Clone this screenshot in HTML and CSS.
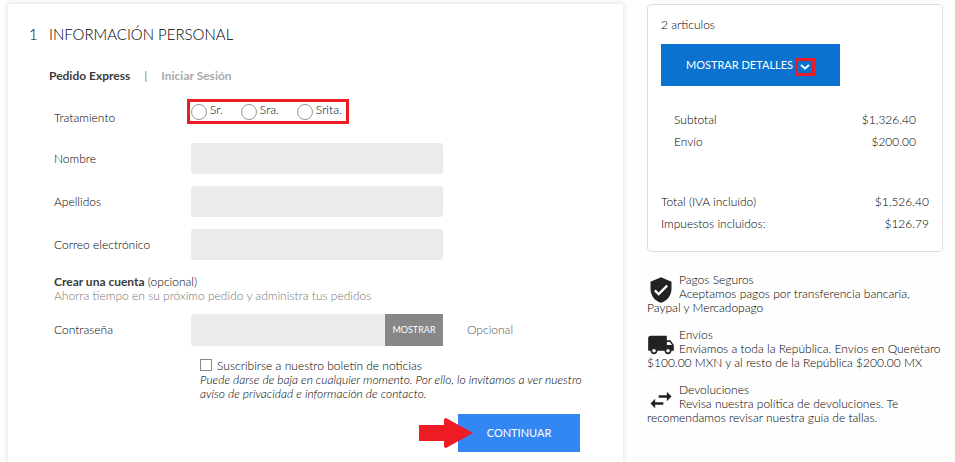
FILE: index.html
```html
<!DOCTYPE html>
<html lang="es">
<head>
<meta charset="utf-8">
<meta name="viewport" content="width=device-width, initial-scale=1">
<title>Información personal</title>
<link rel="stylesheet" href="styles.css">
</head>
<body>
<main class="checkout">
  <section class="step">
    <h1 class="step-title"><span class="step-number">1</span>Información personal</h1>
    <nav class="tabs">
      <a class="tab tab-active" href="#express">Pedido Express</a>
      <span class="tab-divider">|</span>
      <a class="tab" href="#login">Iniciar Sesión</a>
    </nav>
    <form class="form">
      <div class="row row-title">
        <span class="label" id="treatment">Tratamiento</span>
        <div class="radios" role="radiogroup" aria-labelledby="treatment">
          <label class="radio"><input type="radio" name="title">Sr.</label>
          <label class="radio"><input type="radio" name="title">Sra.</label>
          <label class="radio"><input type="radio" name="title">Srita.</label>
        </div>
      </div>
      <div class="row">
        <label class="label" for="name">Nombre</label>
        <input class="field" id="name" type="text">
      </div>
      <div class="row">
        <label class="label" for="surname">Apellidos</label>
        <input class="field" id="surname" type="text">
      </div>
      <div class="row">
        <label class="label" for="email">Correo electrónico</label>
        <input class="field" id="email" type="email">
      </div>
      <p class="account"><strong>Crear una cuenta</strong> (opcional)<br><span class="muted">Ahorra tiempo en su próximo pedido y administra tus pedidos</span></p>
      <div class="row">
        <label class="label" for="password">Contraseña</label>
        <div class="password">
          <input class="field" id="password" type="password">
          <button class="reveal" type="button">MOSTRAR</button>
        </div>
        <span class="comment">Opcional</span>
      </div>
      <div class="newsletter">
        <label class="check"><input type="checkbox">Suscribirse a nuestro boletín de noticias</label>
        <em>Puede darse de baja en cualquier momento. Por ello, lo invitamos a ver nuestro aviso de privacidad e información de contacto.</em>
      </div>
      <div class="actions">
        <button class="continue" type="submit">CONTINUAR</button>
        <svg class="arrow" viewBox="0 0 54 30" aria-hidden="true"><path d="M0 7h25V1l2-1 27 15-27 15-2-1v-6H0z"/></svg>
      </div>
    </form>
  </section>

  <aside class="side">
    <section class="summary">
      <p class="count">2 articulos</p>
      <button class="details" type="button">MOSTRAR DETALLES
        <span class="chevron"><svg viewBox="0 0 10 6" aria-hidden="true"><path d="M1 1l4 3.500 4-3.500"/></svg></span>
      </button>
      <dl class="lines lines-inner">
        <div class="line"><dt>Subtotal</dt><dd>$1,326.40</dd></div>
        <div class="line"><dt>Envío</dt><dd>$200.00</dd></div>
      </dl>
      <dl class="lines">
        <div class="line"><dt>Total (IVA incluído)</dt><dd>$1,526.40</dd></div>
        <div class="line"><dt>Impuestos incluidos:</dt><dd>$126.79</dd></div>
      </dl>
    </section>
    <ul class="notes">
      <li class="note">
        <svg class="note-icon" viewBox="0 0 24 24" aria-hidden="true"><path d="M12 1L3 5v6c0 5.550 3.840 10.740 9 12 5.160-1.260 9-6.450 9-12V5l-9-4zm-2 16l-4-4 1.410-1.410L10 14.170l6.590-6.590L18 9l-8 8z"/></svg>
        Pagos Seguros<br>Aceptamos pagos por transferencia bancaria, Paypal y Mercadopago
      </li>
      <li class="note">
        <svg class="note-icon" viewBox="0 0 24 24" aria-hidden="true"><path d="M20 8h-3V4H3c-1.100 0-2 .9-2 2v11h2c0 1.660 1.340 3 3 3s3-1.340 3-3h6c0 1.660 1.340 3 3 3s3-1.340 3-3h2v-5l-3-4zM6 18.500c-.83 0-1.500-.67-1.500-1.500s.67-1.500 1.500-1.500 1.500.67 1.500 1.500-.67 1.500-1.500 1.500zm13.500-9l1.960 2.500H17V9.500h2.500zm-1.500 9c-.83 0-1.500-.67-1.500-1.500s.67-1.500 1.500-1.500 1.500.67 1.500 1.500-.67 1.500-1.500 1.500z"/></svg>
        Envíos<br>Enviamos a toda la República. Envíos en Querétaro $100.00 MXN y al resto de la República $200.00 MX
      </li>
      <li class="note">
        <svg class="note-icon" viewBox="0 0 24 24" aria-hidden="true"><path d="M6.990 11L3 15l3.990 4v-3H14v-2H6.990v-3zM21 9l-3.990-4v3H10v2h7.010v3L21 9z"/></svg>
        Devoluciones<br>Revisa nuestra política de devoluciones. Te recomendamos revisar nuestra guía de tallas.
      </li>
    </ul>
  </aside>
</main>
</body>
</html>
```
FILE: styles.css
```css
* {
  box-sizing: border-box;
}

body {
  margin: 0;
  background: #fefefe;
  color: #000;
  font-family: Lato, sans-serif;
  font-size: 12px;
  font-weight: 300;
  line-height: 14px;
}

h1, p, dl, dd, ul {
  margin: 0;
  padding: 0;
}

button, input {
  margin: 0;
  border: 0;
  border-radius: 0;
  font: inherit;
}

.checkout {
  display: grid;
  grid-template-columns: 615fr 296fr;
  gap: 24px;
  min-height: 100vh;
  padding: 4px 12px 0 8px;
}

.step {
  padding: 20px 28px 8px 21px;
  background: #fff;
  box-shadow: 0 0 5px 1px rgba(0, 0, 0, 0.1);
}

.step-title {
  display: flex;
  font-size: 15px;
  font-weight: 300;
  line-height: 20px;
  text-transform: uppercase;
}

.step-number {
  width: 20px;
}

.tabs {
  display: flex;
  gap: 14px;
  padding: 25px 0 0 20px;
  font-weight: 700;
}

.tab {
  color: #aaa;
  text-decoration: none;
}

.tab-active {
  color: #3c3c3c;
}

.tab-divider {
  color: #888;
  font-weight: 400;
}

.form {
  padding: 15px 0 0 25px;
}

.row {
  display: grid;
  grid-template-columns: 137px 252px 1fr;
  align-items: center;
  margin-bottom: 12px;
}

.row-title {
  margin-bottom: 18px;
}

.row-title .label {
  padding-top: 13px;
}

.radios {
  display: flex;
  justify-self: start;
  gap: 18px;
  height: 25px;
  margin-left: -4px;
  padding: 1px 4px 0 1px;
  border: 3px solid #ed1c24;
}

.radio {
  display: flex;
  gap: 3px;
}

.radio input {
  appearance: none;
  width: 16px;
  height: 16px;
  margin-top: 1px;
  border: 1px solid #999;
  border-radius: 50%;
  background: #fff;
}

.field {
  width: 100%;
  height: 31px;
  padding: 0 10px;
  border-radius: 3px;
  background: #ebebeb;
}

.account {
  padding: 3px 0 11px;
}

.account strong {
  font-weight: 700;
  color: #3c3c3c;
}

.muted {
  color: #777;
}

.password {
  display: flex;
}

.password .field {
  flex: 1;
  min-width: 0;
  height: 32px;
  border-radius: 3px 0 0 3px;
}

.reveal {
  width: 58px;
  padding: 0;
  background: #878787;
  color: #fff;
  font-size: 9px;
  font-weight: 400;
}

.comment {
  padding-left: 24px;
  color: #555;
}

.newsletter {
  padding: 1px 0 0 146px;
}

.check {
  display: flex;
  gap: 5px;
}

.check input {
  appearance: none;
  width: 12px;
  height: 12px;
  border: 1px solid #888;
  background: #fff;
}

.actions {
  position: relative;
  display: flex;
  justify-content: flex-end;
  padding: 13px 15px 0 0;
}

.continue {
  width: 122px;
  height: 38px;
  background: #3387f3;
  color: #fff;
  font-size: 11px;
  font-weight: 400;
}

.arrow {
  position: absolute;
  top: 17px;
  right: 122px;
  width: 54px;
  height: 30px;
  fill: #ed1c24;
}

.summary {
  height: 248px;
  padding: 13px;
  border: 1px solid #ddd;
  border-radius: 4px;
  background: #fff;
}

.details {
  display: flex;
  align-items: center;
  justify-content: center;
  gap: 2px;
  width: 179px;
  height: 42px;
  margin-top: 12px;
  background: #0b72d0;
  color: #fff;
  font-size: 11px;
  font-weight: 400;
}

.chevron {
  display: grid;
  place-items: center;
  width: 20px;
  height: 18px;
  margin-top: 4px;
  border: 3px solid #ed1c24;
}

.chevron svg {
  width: 10px;
  height: 6px;
  fill: none;
  stroke: #fff;
  stroke-width: 2;
}

.lines-inner {
  padding: 23px 13px 38px;
}

.line {
  display: flex;
  justify-content: space-between;
  line-height: 22px;
}

.notes {
  padding-top: 21px;
  list-style: none;
}

.note {
  margin-bottom: 13px;
}

.note-icon {
  float: left;
  width: 28px;
  height: 28px;
  margin: 3px 4px -4px 0;
  fill: #222;
}
```
